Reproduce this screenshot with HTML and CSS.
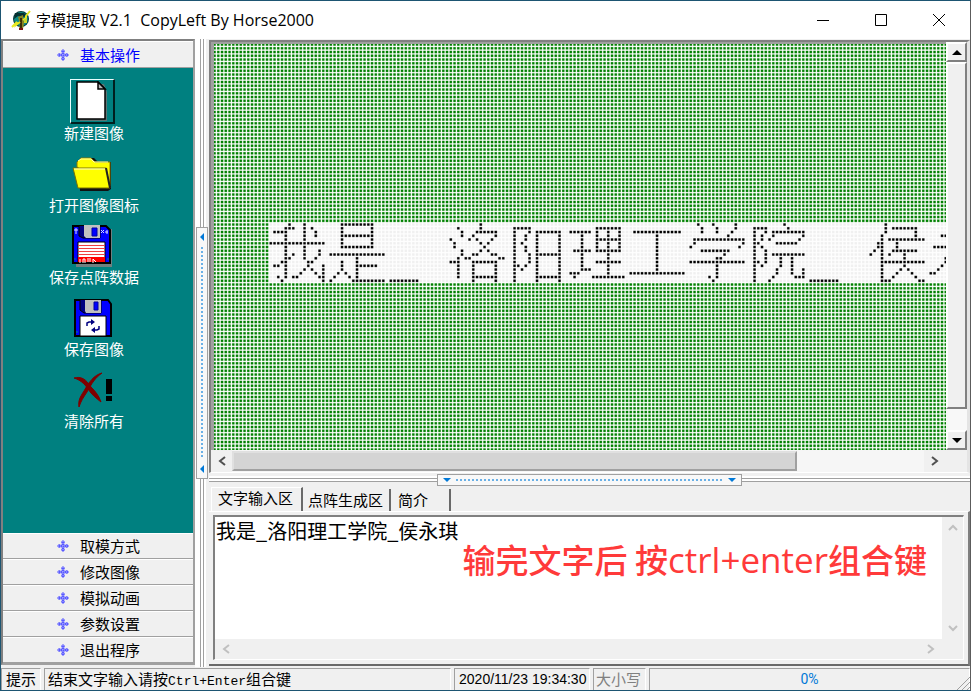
FILE: index.html
```html
<!DOCTYPE html>
<html lang="zh-CN">
<head>
<meta charset="utf-8">
<title>字模提取 V2.1</title>
<link rel="stylesheet" href="styles.css">
</head>
<body>
<div class="window">
  <header class="titlebar">
    <svg class="app-icon" viewBox="0 0 20 20" aria-hidden="true">
      <circle cx="10" cy="9" r="8" fill="#063b3b"/>
      <circle cx="10" cy="9" r="7" fill="#0e8a84"/>
      <path d="M4 3h9l3 3-4 1-5-1-4 3z" fill="#063030"/>
      <path d="M7 7l5-2 1 8-1 6H8l1-5z" fill="#8a8420"/>
      <path d="M9 8h2v10H9z" fill="#3a2c08"/>
      <path d="M1 17l5-5-1 3 4-3M19 1l-4 5v2l-3 2" fill="none" stroke="#e8e820" stroke-width="2"/>
      <path d="M13 9h3v4h-3z" fill="#c9d62a"/>
      <path d="M8 18h4v2H8z" fill="#7a1010"/>
    </svg>
    <h1 class="title">字模提取 <span class="name">V2.1&nbsp; CopyLeft By Horse2000</span></h1>
    <button class="win-btn" aria-label="最小化"><svg viewBox="0 0 12 12"><path d="M0 6.5h12"/></svg></button>
    <button class="win-btn" aria-label="最大化"><svg viewBox="0 0 12 12"><path d="M.5.5h11v11H.5z"/></svg></button>
    <button class="win-btn" aria-label="关闭"><svg viewBox="0 0 12 12"><path d="M0 0l12 12M12 0L0 12"/></svg></button>
  </header>

  <main class="main">
    <nav class="sidebar">
      <button class="group active"><svg class="mark" viewBox="0 0 12 12"><use href="#mark"/></svg>基本操作</button>
      <div class="tools">
        <button class="tool">
          <span class="pic raised"><svg width="32" height="40" viewBox="0 0 32 40">
            <path d="M4 3h24l3 8v29H4z" fill="#5c7474"/>
            <path d="M1 1h21l7 7v30H1z" fill="#fff" stroke="#000" stroke-width="1.5"/>
            <path d="M22 1v7h7z" fill="#b8b8b8" stroke="#000" stroke-width="1.5"/>
          </svg></span>
          <span>新建图像</span>
        </button>
        <button class="tool">
          <span class="pic"><svg width="42" height="36" viewBox="0 0 42 36">
            <path d="M7 12V6l4-4h11l4 4h13v27l-3 2H8z" fill="#111"/>
            <path d="M5 11V6l4-4h10l4 4h15v24l-3 2z" fill="#ff0" stroke="#8a7a00" stroke-width="1"/>
            <path d="M6 5l3-2h10l3 3h14" fill="none" stroke="#ffffb0" stroke-width="1"/>
            <path d="M1 12h33l4 20H6z" fill="#ff0" stroke="#7a7000" stroke-width="1"/>
            <path d="M2 13h31" stroke="#ffffd0" stroke-width="1"/>
            <path d="M34 12l4 20" stroke="#222" stroke-width="2"/>
          </svg></span>
          <span>打开图像图标</span>
        </button>
        <button class="tool">
          <span class="pic"><svg width="42" height="42" viewBox="0 0 42 42">
            <path d="M4 4h36v38H4z" fill="#6f8080"/>
            <path d="M1 1h33l4 4v33H1z" fill="#00f" stroke="#000" stroke-width="2"/>
            <path d="M7 1v10l4 2h17V1" fill="#000080" stroke="#000"/>
            <path d="M12 0h16v13H14l-2-2z" fill="#c0c0c0"/>
            <path d="M20 3h5v8h-5z" fill="#00f" stroke="#0000a0"/>
            <path d="M4 3v6M2 5h4M29 5l3 3M32 5l-3 3M33 7h3M35 5v4" stroke="#d8d8ff" stroke-width="1"/>
            <path d="M6 17h27v20H6z" fill="#fff" stroke="#000" stroke-width="1"/>
            <path d="M6 20.5h27M6 23.5h27M6 26.5h27M6 29.500h27" stroke="#f04040" stroke-width="1"/>
            <path d="M6 32h27v5H6z" fill="#f00"/>
            <path d="M8 34v4M11 38v-4h2v4M15 34h4M15 36h4M21 38v-4l3 3" stroke="#fff" fill="none"/>
            <path d="M3 33v2M36 33v2" stroke="#008080" stroke-width="1"/>
          </svg></span>
          <span>保存点阵数据</span>
        </button>
        <button class="tool">
          <span class="pic"><svg width="38" height="38" viewBox="0 0 38 38">
            <path d="M1 1h33l3 4v32H1z" fill="#00f" stroke="#000" stroke-width="2"/>
            <path d="M6 1v10l4 3h17V1" fill="#000080" stroke="#000"/>
            <path d="M11 1h16v13H12l-1-2z" fill="#c0c0c0"/>
            <path d="M20 3h4v8h-4z" fill="#00f" stroke="#0000a0"/>
            <path d="M6 17h26v20H6z" fill="#fff" stroke="#000"/>
            <path d="M13 27v-3l2-1h3M25 27v3l-2 1h-3" fill="none" stroke="#000080" stroke-width="1.5"/>
            <path d="M17 20l4 3-4 3zM21 28l-4 3 4 3z" fill="#000080"/>
            <path d="M3 32v2" stroke="#008080"/>
          </svg></span>
          <span>保存图像</span>
        </button>
        <button class="tool">
          <span class="pic"><svg width="40" height="36" viewBox="0 0 40 36">
            <path d="M1 6c7-2 12 1 17 9 5 5 8 9 10 15-5-4-9-7-13-13C11 11 7 8 1 6z" fill="#800000" stroke="#800000"/>
            <path d="M29 1C21 3 16 10 11 19 7 25 5 29 6 35c2-6 4-9 8-15C19 11 22 6 29 1z" fill="#800000" stroke="#800000"/>
            <path d="M33 7h6v15h-6zM33 24h6v5h-6z" fill="#000"/>
          </svg></span>
          <span>清除所有</span>
        </button>
      </div>
      <button class="group"><svg class="mark" viewBox="0 0 12 12"><use href="#mark"/></svg>取模方式</button>
      <button class="group"><svg class="mark" viewBox="0 0 12 12"><use href="#mark"/></svg>修改图像</button>
      <button class="group"><svg class="mark" viewBox="0 0 12 12"><use href="#mark"/></svg>模拟动画</button>
      <button class="group"><svg class="mark" viewBox="0 0 12 12"><use href="#mark"/></svg>参数设置</button>
      <button class="group"><svg class="mark" viewBox="0 0 12 12"><use href="#mark"/></svg>退出程序</button>
    </nav>

    <div class="split vertical">
      <div class="handle">
        <svg width="4" height="8" viewBox="0 0 4 8"><path d="M4 0v8L0 4z"/></svg>
        <span class="dots"></span>
        <svg width="4" height="8" viewBox="0 0 4 8"><path d="M4 0v8L0 4z"/></svg>
      </div>
    </div>

    <section class="work">
      <div class="viewer">
        <div class="view"><canvas id="matrix" aria-label="点阵图像"></canvas></div>
        <div class="vbar">
          <button class="step" aria-label="向上"><svg width="10" height="5" viewBox="0 0 10 5"><path d="M0 5l5-5 5 5z"/></svg></button>
          <div class="vthumb"></div>
          <div class="vtrack"></div>
          <button class="step" aria-label="向下"><svg width="10" height="5" viewBox="0 0 10 5"><path d="M0 0h10L5 5z"/></svg></button>
        </div>
        <div class="hbar">
          <button class="arrow" aria-label="向左"><svg width="8" height="10" viewBox="0 0 8 10"><path d="M7 1L2 5l5 4"/></svg></button>
          <div class="hthumb"></div>
          <div class="htrack"></div>
          <button class="arrow" aria-label="向右"><svg width="8" height="10" viewBox="0 0 8 10"><path d="M1 1l5 4-5 4"/></svg></button>
        </div>
      </div>

      <div class="split horizontal">
        <div class="handle">
          <svg width="8" height="4" viewBox="0 0 8 4"><path d="M0 0h8L4 4z"/></svg>
          <span class="dots"></span>
          <svg width="8" height="4" viewBox="0 0 8 4"><path d="M0 0h8L4 4z"/></svg>
        </div>
      </div>

      <div class="tabs" role="tablist">
        <button class="tab selected" role="tab">文字输入区</button>
        <button class="tab" role="tab">点阵生成区</button>
        <button class="tab short" role="tab">简介</button>
      </div>
      <div class="page">
        <div class="editor">
          <textarea class="input" aria-label="文字输入区" spellcheck="false">我是_洛阳理工学院_侯永琪</textarea>
          <div class="evbar">
            <svg width="10" height="7" viewBox="0 0 10 7"><path d="M1 6l4-4 4 4"/></svg>
            <svg width="10" height="7" viewBox="0 0 10 7"><path d="M1 1l4 4 4-4"/></svg>
          </div>
          <div class="ehbar">
            <svg width="8" height="10" viewBox="0 0 8 10"><path d="M7 1L2 5l5 4"/></svg>
            <svg width="8" height="10" viewBox="0 0 8 10"><path d="M1 1l5 4-5 4"/></svg>
          </div>
          <p class="note">输完文字后 按<span class="latin">ctrl+enter</span>组合键</p>
        </div>
      </div>
    </section>
  </main>

  <footer class="status">
    <span class="cell">提示</span>
    <span class="cell message">结束文字输入请按<span class="mono">Ctrl+Enter</span>组合键</span>
    <span class="cell clock">2020/11/23 19:34:30</span>
    <span class="cell caps">大小写</span>
    <span class="cell progress">0%</span>
    <svg class="grip" width="14" height="14" viewBox="0 0 14 14"><path d="M1 14L14 1M6 14l8-8M11 14l3-3"/></svg>
  </footer>
</div>

<svg width="0" height="0" class="defs" aria-hidden="true">
  <symbol id="mark" viewBox="0 0 12 12">
    <path d="M6 0l2 2-1 2 1 1 2-1 2 2-2 2-2-1-1 1 1 2-2 2-2-2 1-2-1-1-2 1-2-2 2-2 2 1 1-1-1-2z" fill="#5a5aff"/>
    <path d="M6 1v10M1 6h10" stroke="#b0b0ff" stroke-dasharray="1 1"/>
  </symbol>
</svg>
<script src="matrix.js"></script>
</body>
</html>
```
FILE: styles.css
```css
* { box-sizing: border-box; }

body {
  margin: 0;
  font-family: "Noto Sans CJK SC", sans-serif;
  font-size: 15px;
  line-height: 18px;
  color: #000;
}

button {
  margin: 0;
  padding: 0;
  border: 0;
  background: none;
  font: inherit;
  color: inherit;
}

svg { display: block; flex: none; }
.defs { position: absolute; }

.window {
  display: flex;
  flex-direction: column;
  height: 100vh;
  border: 1px solid #1d5572;
  border-right-color: #5c5c5c;
  background: #f0f0f0;
}

.titlebar {
  display: flex;
  align-items: center;
  flex: none;
  height: 38px;
  padding: 0 2px 0 10px;
  background: #fff;
}
.app-icon { width: 20px; height: 20px; }
.title {
  flex: 1;
  margin: 0 0 0 5px;
  font: 15px/20px "Open Sans", "Noto Sans CJK SC", sans-serif;
}
.name { font-size: 16px; }
.win-btn {
  display: flex;
  align-items: center;
  justify-content: center;
  width: 58px;
  height: 38px;
}
.win-btn svg { width: 12px; height: 12px; fill: none; stroke: #000; }

.main {
  display: flex;
  flex: 1;
  min-height: 0;
}

.sidebar {
  display: flex;
  flex-direction: column;
  flex: none;
  width: 194px;
  margin-bottom: 2px;
  border: 2px solid #a0a0a0;
  border-top-color: #808080;
  border-left-color: #808080;
}
.group {
  display: flex;
  align-items: center;
  flex: none;
  gap: 11px;
  height: 26px;
  padding-left: 54px;
  border-top: 1px solid #fff;
  border-bottom: 1px solid #a0a0a0;
  background: #f0f0f0;
}
.group.active { height: 27px; color: #00f; }
.mark { width: 12px; height: 12px; }

.tools {
  display: flex;
  flex-direction: column;
  align-items: center;
  flex: 1;
  gap: 9px;
  padding: 11px 8px 0 0;
  background: #008080;
  color: #fff;
}
.tool {
  display: flex;
  flex-direction: column;
  align-items: center;
}
.pic {
  display: flex;
  align-items: center;
  justify-content: center;
  width: 45px;
  height: 45px;
  margin-right: 2px;
}
.raised {
  border: 1px solid #e8ffff;
  border-right: 2px solid #002020;
  border-bottom: 2px solid #002020;
}

.split { display: flex; align-items: center; justify-content: center; flex: none; }
.vertical {
  width: 13px;
  background: linear-gradient(90deg, #fff 5px, #a0a0a0 5px 6px, #fff 6px 8px, #a0a0a0 8px 9px, #fff 9px 11px, #f0f0f0 11px);
}
.horizontal {
  height: 14px;
  background: linear-gradient(#f0f0f0 3px, #fff 3px 5px, #a0a0a0 5px 6px, #fff 6px 8px, #a0a0a0 8px 9px, #f0f0f0 9px);
}
.handle {
  display: flex;
  align-items: center;
  justify-content: space-between;
  border: 1px solid #a0a0a0;
  background: #f8f8f8;
  fill: #0078d7;
}
.vertical .handle {
  flex-direction: column;
  width: 12px;
  height: 40%;
  padding: 5px 0;
}
.horizontal .handle {
  width: 40%;
  height: 12px;
  padding: 0 5px;
}
.vertical .dots {
  flex: 1;
  width: 2px;
  margin: 6px 0;
  background: repeating-linear-gradient(#6ab0e6 0 2px, transparent 2px 4px);
}
.horizontal .dots {
  flex: 1;
  height: 2px;
  margin: 0 5px;
  background: repeating-linear-gradient(90deg, #6ab0e6 0 2px, transparent 2px 4px);
}

.work {
  display: flex;
  flex-direction: column;
  flex: 1;
  min-width: 0;
  padding-left: 1px;
}

.viewer {
  display: grid;
  grid-template: minmax(0, 1fr) 22px / minmax(0, 1fr) 21px;
  flex: 1;
  min-height: 0;
  margin-top: 1px;
  border: 2px solid #808080;
  border-right: 3px solid #e4e4e4;
  border-bottom: 1px solid #fff;
}
.view {
  overflow: hidden;
  min-width: 0;
  min-height: 0;
  border-left: 3px solid #a0a0a0;
  border-top: 2px solid #a0a0a0;
}
.view canvas { display: block; width: 100%; height: 100%; }

.vbar { display: flex; flex-direction: column; background: #f8f8f8; }
.step,
.vthumb {
  border: 2px solid #808080;
  border-top-color: #fff;
  border-left-color: #fff;
  background: #f0f0f0;
}
.step {
  display: flex;
  align-items: center;
  justify-content: center;
  height: 20px;
}
.vthumb { flex: 346; }
.vtrack { flex: 21; }

.hbar {
  display: flex;
  align-items: center;
  grid-column: 1 / -1;
  background: #f6f6f6;
}
.arrow {
  display: flex;
  align-items: center;
  justify-content: center;
  width: 21px;
  height: 22px;
  background: #f0f0f0;
}
.arrow svg { fill: none; stroke: #505050; stroke-width: 2; }
.hthumb {
  flex: 565;
  height: 20px;
  border: 2px solid #a0a0a0;
  border-top-color: #e0e0e0;
  border-left-color: #e0e0e0;
  background: #d4d4d4;
}
.htrack { flex: 128; }
.hbar .arrow:last-child { width: 43px; padding-right: 21px; }

.tabs {
  display: flex;
  align-items: flex-end;
  flex: none;
  height: 24px;
  padding-left: 2px;
}
.tab {
  height: 22px;
  padding: 0 6px 1px 5px;
  border-right: 2px solid #696969;
  text-align: left;
}
.tab.selected {
  height: 24px;
  padding: 0 8px 4px 6px;
  border-top: 1px solid #fff;
  border-left: 1px solid #fff;
}
.tab.short { width: 60px; padding-left: 7px; }

.page {
  flex: none;
  height: 155px;
  margin-bottom: 1px;
  padding: 3px 4px 4px 4px;
  border-top: 1px solid #fff;
  border-right: 2px solid #808080;
  border-bottom: 2px solid #696969;
}
.editor {
  position: relative;
  display: grid;
  grid-template: minmax(0, 1fr) 20px / minmax(0, 1fr) 21px;
  height: 100%;
  border: 2px solid #808080;
  border-right: 1px solid #fff;
  border-bottom: 1px solid #fff;
}
.input {
  width: 100%;
  height: 100%;
  padding: 2px 1px;
  border: 0;
  outline: 0;
  resize: none;
  overflow: hidden;
  background: #fff;
  font: 20px/24px "Noto Sans CJK SC", sans-serif;
}
.evbar,
.ehbar {
  display: flex;
  align-items: center;
  justify-content: space-between;
  fill: none;
  stroke: #c0c0c0;
  stroke-width: 2;
}
.evbar { flex-direction: column; padding: 7px 0; }
.ehbar { grid-column: 1 / -1; padding: 0 28px 0 7px; }
.note {
  position: absolute;
  top: 20px;
  right: 36px;
  margin: 0;
  color: #ff3a3a;
  font-size: 33px;
  font-weight: 500;
  line-height: 44px;
  white-space: nowrap;
}
.latin { font-family: "Open Sans", sans-serif; font-size: 35px; font-weight: 400; }

.status {
  display: flex;
  flex: none;
  gap: 3px;
  position: relative;
  height: 23px;
  padding-top: 1px;
}
.cell {
  flex: none;
  padding: 0 4px;
  border-top: 1px solid #a0a0a0;
  border-left: 1px solid #a0a0a0;
  border-right: 1px solid #fff;
  line-height: 20px;
  white-space: nowrap;
}
.message { flex: 407; padding-left: 3px; }
.mono { font: 13px "Liberation Mono", monospace; }
.clock { width: 136px; font-family: "Liberation Sans", sans-serif; font-size: 14px; }
.caps { width: 53px; padding-left: 2px; color: #808080; }
.progress {
  flex: 318;
  text-align: center;
  color: #0078d7;
  font-family: Roboto, sans-serif;
  font-size: 14px;
}
.grip {
  position: absolute;
  right: 0;
  bottom: 0;
  fill: none;
  stroke: #a0a0a0;
}
```
FILE: matrix.js
```js
// Lit cells of the 16-row dot matrix, one string per row ("a-b" is a run of columns).
const ROWS = [
  '5 9 19-27 56 114 118 124 137 164',
  '4-6 9 11 19 27 50 56 65-69 87-93 115 119 124 129-132 138 164 166-172',
  '1-4 9 12 19 27 51 55-60 65 69 71-77 80-85 87 90 93 97-109 115 119 123 129 132 134-142 164 172',
  '4 9 12 19-27 51 54 60 65 68 71 77 83 87 90 93 103 122 129 131 134 142 163 172 179-180',
  '4 9 19 27 48 53 55 59 65 68 71 77 83 87-93 103 113-126 129 131 133 141 163 165-174',
  '0-14 19 27 49 56 58 65 67 71 77 83 87 90 93 103 113 126 129-130 135-140 162-163 167',
  '4 9 19-27 49 57 65 68 71 77 83 87 90 93 103 112 125 129 131 162-163 167 177-180',
  '4 9 13 51 56 58 65 68 71 77 81-85 87-93 103 115-122 129 132 161 163 166-172',
  '4 6 9 13 16-30 51 54-55 59-60 65 69 71-77 83 90 103 121 129 132 134-142 160 163 165 169',
  '4-5 9 12 23 50 52-53 61-62 65 69 71 77 83 90 103 119-120 129 132 136 139 163 169 180',
  '3-4 10-11 19 23 48-50 54-60 65 69 71 77 83 87-93 103 112-126 129-130 132 136 139 163-174 180',
  '1-2 4 10 14 19 23-28 50 54 60 65-66 68 71 77 83 90 103 119 129 131 136 139 163 169 179',
  '4 9 11 14 19 23 50 54 60 65 67 71 77 83-85 90 103 119 129 135 139 142 163 168 170 178',
  '4 8 12 14 18 20 23 50 54 60 65 71 77 80-82 90 96-110 119 129 135 139 142 163 167 171 176-177',
  '2 4 6-7 13-14 17 21 23 50 54-60 65 71-77 81 86-94 117 119 129 134 140-142 163 166 172',
  '3 14 16 22-30 32-39 54 60 65 71 77 118 129 133 144-151 163-165 173-174'
];
const SCALE = 1.25; // desktop scaling of the 3px cell
const BAND_COL = 15;
const BAND_ROW = 48;

function draw() {
  const canvas = document.getElementById('matrix');
  const w = canvas.width = canvas.clientWidth;
  const h = canvas.height = canvas.clientHeight;

  const cols = Math.ceil(w / SCALE / 3) + 1;
  const rows = Math.ceil(h / SCALE / 3) + 1;
  const grid = document.createElement('canvas');
  grid.width = cols * 3;
  grid.height = rows * 3;
  const p = grid.getContext('2d');
  p.fillStyle = '#fff';
  p.fillRect(0, 0, grid.width, grid.height);
  const cell = (c, r, color) => {
    p.fillStyle = color;
    p.fillRect(c * 3 + 1, r * 3 + 1, 2, 2);
  };
  for (let r = 0; r < rows; r++) {
    for (let c = 0; c < cols; c++) {
      const inBand = r >= BAND_ROW && r < BAND_ROW + 16 && c >= BAND_COL;
      cell(c, r, inBand ? '#f0f0f0' : '#008000');
    }
  }
  ROWS.forEach((line, r) => {
    for (const run of line.split(' ')) {
      const [a, b = a] = run.split('-').map(Number);
      for (let c = a; c <= b; c++) cell(BAND_COL + c, BAND_ROW + r, '#000');
    }
  });

  const g = canvas.getContext('2d');
  g.imageSmoothingEnabled = true;
  g.drawImage(grid, -2, -2, grid.width * SCALE, grid.height * SCALE);
}

draw();
window.addEventListener('resize', draw);
```
